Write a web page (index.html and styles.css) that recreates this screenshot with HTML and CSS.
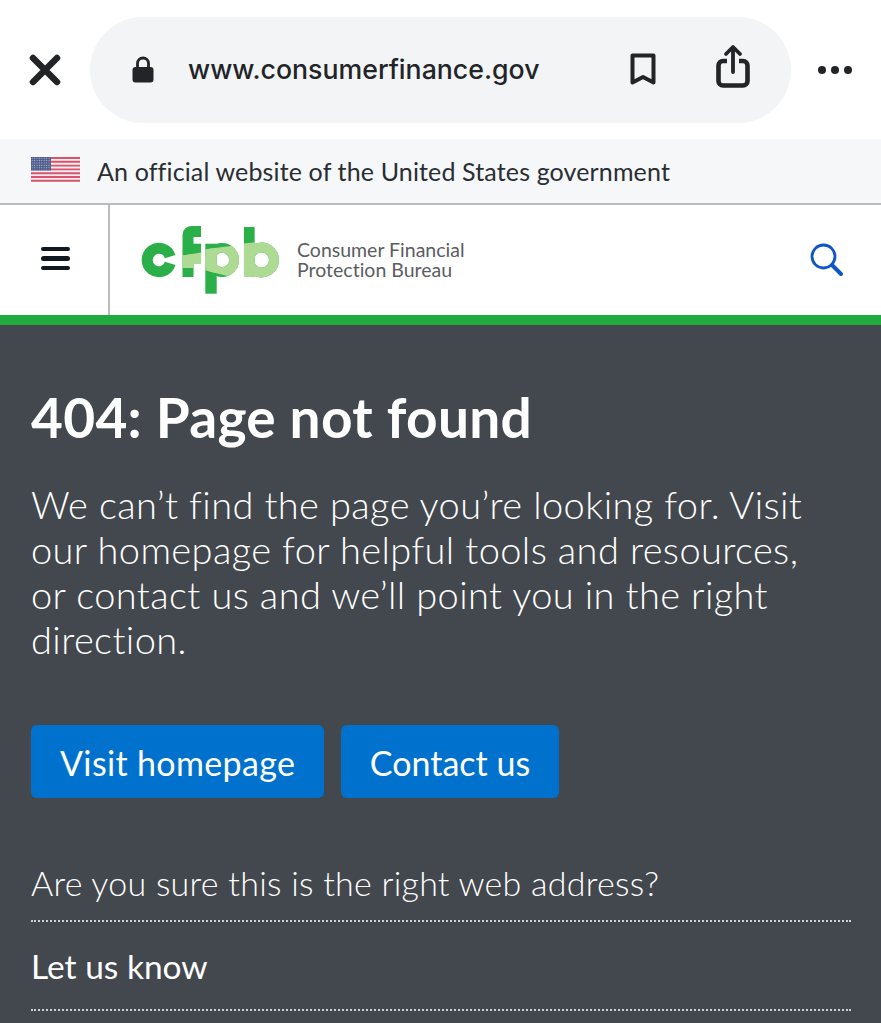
FILE: index.html
```html
<!DOCTYPE html>
<html lang="en">

<head>
    <meta charset="UTF-8">
    <meta name="viewport" content="width=device-width, initial-scale=1.0">
    <title>404: Page not found</title>
    <link rel="stylesheet" href="styles.css">
</head>

<body>
    <div class="browser-bar">
        <svg class="close-icon" width="32" height="32" viewBox="0 0 32 32">
            <path d="M4 4L28 28M28 4L4 28" fill="none" stroke="#222428" stroke-width="6.500" stroke-linecap="round" />
        </svg>
        <div class="url-pill">
            <svg class="lock-icon" width="22" height="27" viewBox="0 0 22 27">
                <path d="M5.500 12V7.500a5.500 5.500 0 0 1 11 0V12" fill="none" stroke="#222428" stroke-width="2.800" />
                <rect x="0.500" y="11" width="21" height="15.500" rx="3" fill="#222428" />
            </svg>
            <span class="url-text">www.consumerfinance.gov</span>
            <svg class="bookmark-icon" width="26" height="33" viewBox="0 0 26 33">
                <path d="M2.500 2.500H23.500V29.500L13 24L2.500 29.500Z" fill="none" stroke="#222428" stroke-width="4" stroke-linejoin="round" />
            </svg>
            <svg class="share-icon" width="34" height="44" viewBox="0 0 34 44">
                <path d="M11 17H7a4.500 4.500 0 0 0-4.500 4.500V37a4.500 4.500 0 0 0 4.500 4.500H27a4.500 4.500 0 0 0 4.500-4.500V21.500A4.500 4.500 0 0 0 27 17H23" fill="none" stroke="#222428" stroke-width="4.600" />
                <path d="M17 28V3.500M10 10L17 3L24 10" fill="none" stroke="#222428" stroke-width="3.800" stroke-linecap="round" stroke-linejoin="round" />
            </svg>
        </div>
        <div class="more-dots">
            <span></span><span></span><span></span>
        </div>
    </div>

    <div class="gov-banner">
        <svg class="flag" width="49" height="25" viewBox="0 0 49 25">
            <defs>
                <pattern id="stars" width="2.400" height="2.400" patternUnits="userSpaceOnUse">
                    <circle cx="1.200" cy="1.200" r="0.600" fill="#b9c0d6" />
                </pattern>
            </defs>
            <rect width="49" height="25" fill="#f4eef0" />
            <path d="M0 1H49M0 4.800H49M0 8.600H49M0 12.400H49M0 16.200H49M0 20H49M0 23.800H49" stroke="#d8536b" stroke-width="1.900" />
            <rect width="20" height="13.500" fill="#4f5d8c" />
            <rect width="20" height="13.500" fill="url(#stars)" />
        </svg>
        <span>An official website of the United States government</span>
    </div>

    <header class="site-header">
        <div class="menu-cell">
            <div class="menu-icon">
                <span></span><span></span><span></span>
            </div>
        </div>
        <div class="brand">
            <svg class="logo" width="142" height="71" viewBox="0 0 142 71">
                <defs>
                    <clipPath id="band">
                        <path d="M40 31L61 27.500L65 24.300L91 21L104 18.500L115 17.300L142 10V60H100V53H95L65 45.300L62 40L53 43H40Z" />
                    </clipPath>
                </defs>
                <g fill="none" stroke="#2aaf49" stroke-width="11">
                    <path d="M30.200 31.600A11.750 11.750 0 1 0 30.200 38.400" stroke-width="11" />
                    <path d="M48 52V10Q48 6.500 52 6.500H61" />
                    <path d="M43 28.850H61" stroke-width="20.300" />
                    <path d="M71 68.700V18.700" stroke-width="11.400" />
                    <circle cx="82" cy="35" r="12.100" stroke-width="9.800" />
                    <path d="M109.300 2V52" stroke-width="10.700" />
                    <circle cx="121.500" cy="35" r="12.500" stroke-width="10" />
                </g>
                <g clip-path="url(#band)" fill="none" stroke="#aedb93" stroke-width="11">
                    <path d="M48 52V10" />
                    <path d="M43 28.850H61" stroke-width="20.300" />
                    <path d="M71 68.700V18.700" stroke-width="11.400" />
                    <circle cx="82" cy="35" r="12.100" stroke-width="9.800" />
                    <path d="M109.300 2V52" stroke-width="10.700" />
                    <circle cx="121.500" cy="35" r="12.500" stroke-width="10" />
                </g>
            </svg>
            <div class="agency-name">Consumer Financial<br>Protection Bureau</div>
        </div>
        <svg class="search-icon" width="34" height="34" viewBox="0 0 34 34">
            <circle cx="13.500" cy="13.500" r="11.500" fill="none" stroke="#0f55c4" stroke-width="2.800" />
            <path d="M22 22L31 31" fill="none" stroke="#0f55c4" stroke-width="4" stroke-linecap="round" />
        </svg>
    </header>

    <main class="hero">
        <h1>404: Page not found</h1>
        <p class="lead">We can’t find the page you’re looking for. Visit our homepage for helpful tools and resources, or contact us and we’ll point you in the right direction.</p>
        <div class="buttons">
            <a class="btn btn-home" href="#">Visit homepage</a>
            <a class="btn btn-contact" href="#">Contact us</a>
        </div>
        <p class="question">Are you sure this is the right web address?</p>
        <a class="let-us-know" href="#">Let us know</a>
    </main>
</body>

</html>
```

FILE: styles.css
```css
html,
body {
    margin: 0;
    padding: 0;
}

body {
    height: 1023px;
    overflow: hidden;
    background-color: #43484e;
    font-family: "Lato", "Liberation Sans", sans-serif;
    font-variant-ligatures: none;
}

.browser-bar {
    display: flex;
    align-items: center;
    height: 139px;
    background-color: white;
    padding-left: 29px;
    box-sizing: border-box;
}

.close-icon {
    flex: none;
    margin-right: 29px;
}

.url-pill {
    display: flex;
    align-items: center;
    width: 701px;
    height: 106px;
    margin-right: 27px;
    padding-left: 42px;
    box-sizing: border-box;
    background-color: #f3f4f6;
    border-radius: 53px;
    color: #222428;
}

.url-text {
    width: 442px;
    margin-left: 34px;
    margin-top: -2px;
    font-family: "Inter", sans-serif;
    font-size: 26.700px;
    font-weight: 500;
}

.share-icon {
    margin-left: 60px;
    margin-top: -7px;
}

.more-dots {
    display: flex;
    gap: 5px;
}

.more-dots span {
    width: 8px;
    height: 8px;
    border-radius: 50%;
    background-color: #222428;
}

.gov-banner {
    display: flex;
    align-items: center;
    height: 64px;
    padding-left: 31px;
    background-color: #f5f7f8;
    border-bottom: 2px solid #bbbcbd;
    color: #2a2e33;
    font-size: 25px;
    letter-spacing: 0.140px;
}

.flag {
    margin-right: 17px;
    margin-top: -3px;
}

.site-header {
    display: flex;
    align-items: center;
    height: 110px;
    background-color: white;
    border-bottom: 10px solid #20aa3f;
}

.menu-cell {
    display: flex;
    align-items: center;
    justify-content: center;
    width: 108px;
    height: 100%;
    border-right: 2px solid #bbbcbd;
}

.menu-icon {
    display: flex;
    flex-direction: column;
    gap: 5px;
    margin-top: -3px;
    margin-left: 2px;
}

.menu-icon span {
    width: 29px;
    height: 4.500px;
    border-radius: 3px;
    background-color: #101820;
}

.brand {
    display: flex;
    align-items: center;
    flex: 1;
    padding-left: 30px;
}

.agency-name {
    margin-left: 15px;
    color: #5a5d61;
    font-size: 19.500px;
    line-height: 20px;
}

.search-icon {
    margin-right: 37px;
}

.hero {
    padding: 60px 30px 0 31px;
    color: white;
}

.hero h1 {
    margin: 0;
    font-size: 55px;
    font-weight: 700;
    line-height: 64px;
    letter-spacing: 0.300px;
}

.lead {
    max-width: 800px;
    margin: 33px 0 0;
    font-size: 38px;
    font-weight: 300;
    line-height: 45px;
    letter-spacing: 0.380px;
}

.buttons {
    display: flex;
    gap: 17px;
    margin-top: 63px;
}

.btn {
    display: block;
    height: 73px;
    line-height: 75px;
    border-radius: 6px;
    background-color: #0072ce;
    color: white;
    font-size: 34px;
    text-decoration: none;
}

.btn-home {
    padding: 0 29px;
    letter-spacing: 0.350px;
}

.btn-contact {
    padding: 0 28.500px;
}

.question {
    margin: 65px 0 0;
    padding-bottom: 17px;
    border-bottom: 2px dotted #cfd0d2;
    font-size: 34px;
    font-weight: 300;
    line-height: 40px;
    letter-spacing: 0.250px;
}

.let-us-know {
    display: block;
    padding: 24px 0 23px;
    border-bottom: 2px dotted #cfd0d2;
    color: white;
    font-size: 33.500px;
    line-height: 40px;
    text-decoration: none;
}
```
